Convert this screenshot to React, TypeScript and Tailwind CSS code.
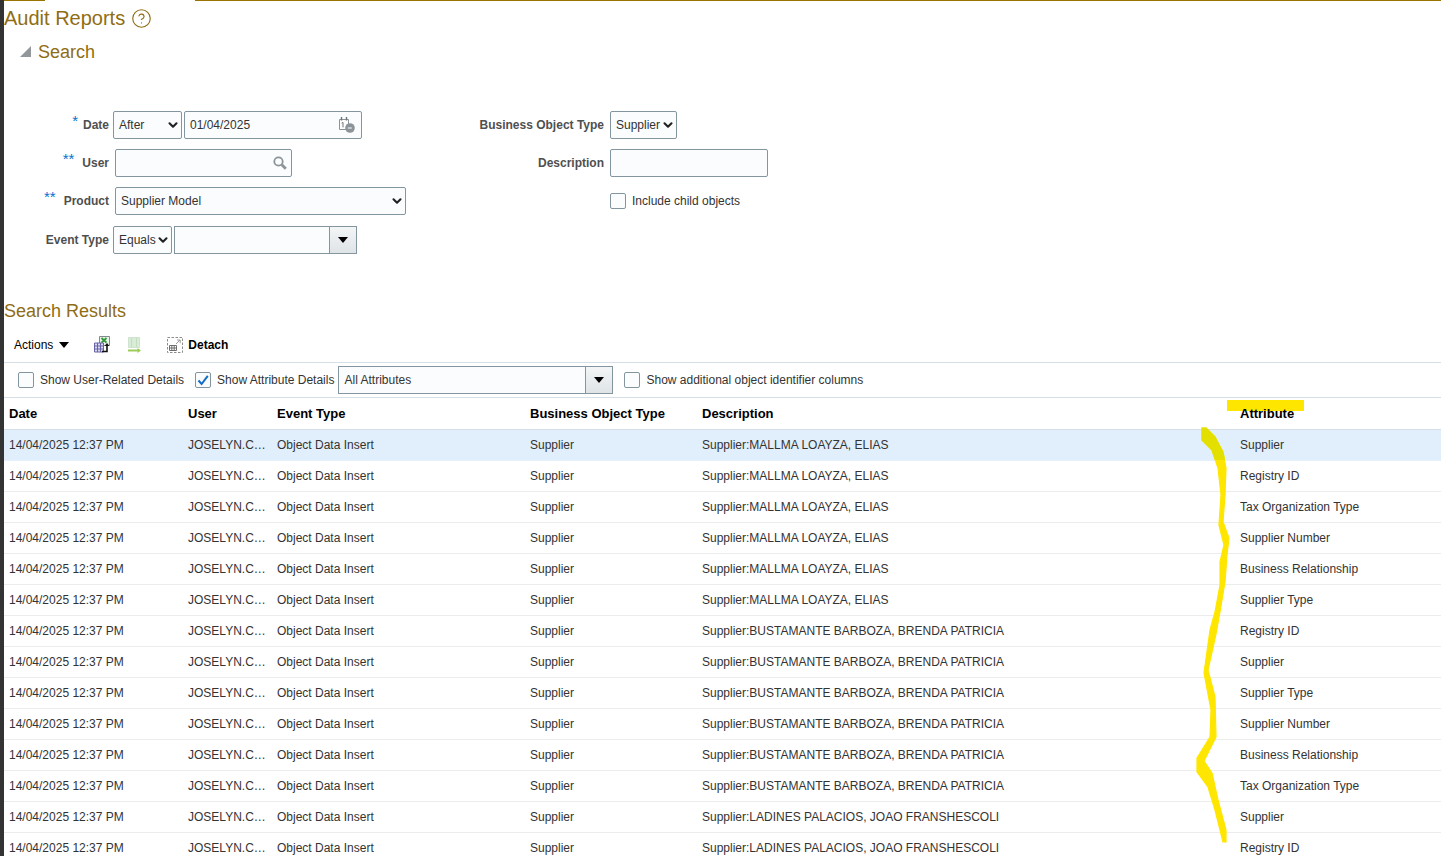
import React from 'react';
import { ChevronDown, CircleHelp } from 'lucide-react';

type Row = { description: string; attribute: string; selected?: boolean };

const MALLMA = 'Supplier:MALLMA LOAYZA, ELIAS';
const BUSTAMANTE = 'Supplier:BUSTAMANTE BARBOZA, BRENDA PATRICIA';
const LADINES = 'Supplier:LADINES PALACIOS, JOAO FRANSHESCOLI';

const rows: Row[] = [
  { description: MALLMA, attribute: 'Supplier', selected: true },
  { description: MALLMA, attribute: 'Registry ID' },
  { description: MALLMA, attribute: 'Tax Organization Type' },
  { description: MALLMA, attribute: 'Supplier Number' },
  { description: MALLMA, attribute: 'Business Relationship' },
  { description: MALLMA, attribute: 'Supplier Type' },
  { description: BUSTAMANTE, attribute: 'Registry ID' },
  { description: BUSTAMANTE, attribute: 'Supplier' },
  { description: BUSTAMANTE, attribute: 'Supplier Type' },
  { description: BUSTAMANTE, attribute: 'Supplier Number' },
  { description: BUSTAMANTE, attribute: 'Business Relationship' },
  { description: BUSTAMANTE, attribute: 'Tax Organization Type' },
  { description: LADINES, attribute: 'Supplier' },
  { description: LADINES, attribute: 'Registry ID' },
];

const GRID = 'grid grid-cols-[179px_89px_253px_172px_538px_206px]';
const FIELD = 'h-7 rounded-[2px] border border-[#83969f] bg-[#fbfcfd] text-xs text-[#333]';

const SelectBox = ({ value, className }: { value: string; className: string }) => (
  <div className={`${FIELD} flex items-center justify-between pl-[5px] pr-[1px] ${className}`}>
    <span>{value}</span>
    <ChevronDown size={14} strokeWidth={3.6} className="text-[#222]" />
  </div>
);

const ComboBox = ({ value, className }: { value?: string; className: string }) => (
  <div className={`${FIELD} flex items-stretch rounded-none ${className}`}>
    <span className="flex flex-1 items-center pl-[5px]">{value}</span>
    <span className="flex w-[27px] items-center justify-center border-l border-[#83969f] bg-gradient-to-b from-[#f3f5f6] to-[#dfe4e7]">
      <span className="h-0 w-0 border-x-[5px] border-t-[6px] border-x-transparent border-t-black" />
    </span>
  </div>
);

const CheckBox = ({ checked }: { checked?: boolean }) => (
  <span className="flex h-4 w-4 shrink-0 items-center justify-center rounded-[2px] border border-[#83969f] bg-[#fbfcfd]">
    {checked && (
      <svg width="12" height="12" viewBox="0 0 12 12">
        <path d="M1.5 6.5 L4.6 10 L10.8 1.8" fill="none" stroke="#0f6fc6" strokeWidth="2" />
      </svg>
    )}
  </span>
);

const Label = ({ text, stars, className = '' }: { text: string; stars?: string; className?: string }) => (
  <div className={`flex shrink-0 justify-end text-xs font-bold text-[#4f4f4f] ${className}`}>
    {stars && <span className="relative -top-[3px] text-[15px] leading-[14px] font-normal text-[#0572ce]">{stars}</span>}
    <span>{text}</span>
  </div>
);

const SearchIcon = () => (
  <svg width="14" height="14" viewBox="0 0 14 14">
    <circle cx="5.5" cy="5.5" r="4.2" fill="none" stroke="#8d9499" strokeWidth="1.8" />
    <path d="M8.8 8.8 L12.8 12.8" stroke="#8d9499" strokeWidth="2.8" />
  </svg>
);

const CalendarIcon = () => (
  <svg width="18" height="18" viewBox="0 0 18 18">
    <path d="M1.5 3.5h9v10h-9z" fill="#fff" stroke="#8d9499" />
    <path d="M3.5 1v3.5M8.5 1v3.5" stroke="#6f767b" strokeWidth="1.4" />
    <path d="M3.6 7.2l1.4-.8v5" fill="none" stroke="#6f767b" />
    <circle cx="12" cy="12" r="4.8" fill="#8d9499" />
    <path d="M9.8 12h4" stroke="#fff" strokeWidth="1" />
  </svg>
);

const ExportIcon = () => (
  <svg width="16" height="17" viewBox="0 0 16 17">
    <path d="M5.5 .5h10v9h-10z" fill="#eef3ea" stroke="#7f8a91" />
    <path d="M7.5 2l5 4.6M12.5 2l-5 4.6" stroke="#2f9a3a" strokeWidth="1.9" />
    <path d="M.5 7h9v9h-9z" fill="#dcd9ef" stroke="#6663a6" />
    <path d="M.5 10h9M.5 13h9M3.5 7v9M6.5 7v9" stroke="#6663a6" />
    <path d="M8 15.5h5v-6" fill="none" stroke="#111" strokeWidth="1.6" />
    <path d="M10.6 10l2.4-3 2.4 3z" fill="#111" />
  </svg>
);

const FreezeIcon = () => (
  <svg width="13" height="16" viewBox="0 0 13 16">
    <path d="M.5.5h11v10H.5z" fill="#d9ecd8" stroke="#d0e3d0" />
    <path d="M3.5 1v9M8.5 1v9" stroke="#c2dfc0" />
    <path d="M0 13.5h10" stroke="#9ccb5b" strokeWidth="2" />
    <path d="M9.5 11l3.5 2.5-3.5 2.5z" fill="#9ccb5b" />
  </svg>
);

const DetachIcon = () => (
  <svg width="16" height="16" viewBox="0 0 16 16">
    <rect x=".5" y=".5" width="15" height="15" fill="none" stroke="#8b8b8b" strokeDasharray="2.5 1.5" />
    <path d="M9 7l4-4M10 3h3.2v3.2" fill="none" stroke="#9a9a9a" />
    <path d="M2.5 8.5h7v5h-7zM2.5 11h7M4.8 8.5v5M7.2 8.5v5" fill="none" stroke="#6e6e6e" />
  </svg>
);

const STROKE_OUTLINE =
  'M1202 428 L1206 428 L1215 437 L1223 452 L1226 468 L1225 495 L1223 522 L1229 538 L1227 555 L1225 582 L1220 612 L1216 634 L1212 652 L1208 670 L1215 697 L1216 737 L1204 761 L1212 773 L1218 800 L1226 830 L1226 842 L1223 842 L1215 810 L1208 787 L1197 772 L1197 758 L1210 737 L1211 710 L1204 673 L1210 630 L1215 612 L1220 585 L1220 562 L1224 545 L1219 525 L1221 495 L1218 468 L1212 450 L1202 440 Z';

// the yellow marker stroke somebody drew over the screenshot
const MarkerStroke = () => (
  <svg className="pointer-events-none absolute left-[1190px] top-[425px]" width="45" height="420" viewBox="1190 425 45 420">
    <defs>
      <clipPath id="selected-row">
        <rect x="1190" y="425" width="45" height="35" />
      </clipPath>
    </defs>
    <path d={STROKE_OUTLINE} fill="#ffe600" stroke="#ffe600" strokeWidth="1.2" strokeLinejoin="round" />
    <path d={STROKE_OUTLINE} fill="#e3e000" stroke="#e3e000" strokeWidth="1.2" strokeLinejoin="round" clipPath="url(#selected-row)" />
  </svg>
);

const App: React.FC = () => {
  return (
    <div className="relative flex h-screen overflow-hidden bg-white font-['Liberation_Sans',Arial,sans-serif] text-[#333]">
      <div className="w-1 shrink-0 bg-[#333]" />
      <div className="min-w-0 flex-1">
        <div className="flex h-px">
          <div className="w-[41px] bg-[#9b7400]" />
          <div className="w-[150px]" />
          <div className="flex-1 bg-[#9b7400]" />
        </div>

        <div className="flex h-[34px] items-center gap-[6px]">
          <h1 className="text-xl leading-none text-[#8f6d14]">Audit Reports</h1>
          <CircleHelp size={21} strokeWidth={1.3} className="text-[#8f6d14]" />
        </div>

        <div className="flex h-[33px] items-center gap-[7px] pl-4">
          <span className="h-0 w-0 border-b-[11px] border-l-[11px] border-l-transparent border-b-[#92979b]" />
          <h2 className="text-lg leading-none text-[#8f6d14]">Search</h2>
        </div>

        <div className="mt-[43px] flex">
          <div className="flex w-[600px] flex-col">
            <div className="flex h-[38px]">
              <Label text="Date" stars="*" className="w-[105px] gap-[5px] pt-[6px]" />
              <SelectBox value="After" className="ml-1 w-[69px]" />
              <div className={`${FIELD} ml-[2px] flex w-[178px] items-center justify-between pl-[5px] pr-[5px]`}>
                <span>01/04/2025</span>
                <CalendarIcon />
              </div>
            </div>
            <div className="flex h-[38px]">
              <Label text="User" stars="**" className="w-[105px] gap-[8px] pt-[6px]" />
              <div className={`${FIELD} ml-[6px] flex w-[177px] items-center justify-end pr-[4px]`}>
                <SearchIcon />
              </div>
            </div>
            <div className="flex h-[39px]">
              <Label text="Product" stars="**" className="w-[105px] gap-[8px] pt-[6px]" />
              <SelectBox value="Supplier Model" className="ml-[6px] w-[291px]" />
            </div>
            <div className="flex h-[38px]">
              <Label text="Event Type" className="w-[105px] pt-[6px]" />
              <SelectBox value="Equals" className="ml-1 w-[59px]" />
              <ComboBox className="ml-[2px] w-[183px]" />
            </div>
          </div>

          <div className="flex flex-col">
            <div className="flex h-[38px]">
              <Label text="Business Object Type" className="w-[600px] -ml-[600px] pt-[6px]" />
              <SelectBox value="Supplier" className="ml-[6px] w-[67px]" />
            </div>
            <div className="flex h-[38px]">
              <Label text="Description" className="w-[600px] -ml-[600px] pt-[6px]" />
              <div className={`${FIELD} ml-[6px] w-[158px]`} />
            </div>
            <div className="ml-[6px] flex h-[28px] items-center gap-[6px] text-xs">
              <CheckBox />
              <span>Include child objects</span>
            </div>
          </div>
        </div>

        <h2 className="mt-[35px] flex h-[24px] items-center text-lg leading-none text-[#8f6d14]">Search Results</h2>

        <div className="mt-[6px] flex h-[33px] items-center pb-[2px] text-xs">
          <span className="ml-[10px] text-black">Actions</span>
          <span className="ml-[6px] h-0 w-0 border-x-[5px] border-t-[6px] border-x-transparent border-t-black" />
          <span className="ml-[25px] flex"><ExportIcon /></span>
          <span className="ml-[18px] flex"><FreezeIcon /></span>
          <span className="ml-[26px] flex"><DetachIcon /></span>
          <span className="ml-[5px] font-bold text-black">Detach</span>
        </div>

        <div className="flex h-[36px] items-center border-y border-[#d6dfe6] text-xs">
          <span className="ml-[14px]"><CheckBox /></span>
          <span className="ml-[6px]">Show User-Related Details</span>
          <span className="ml-[11px]"><CheckBox checked /></span>
          <span className="ml-[6px]">Show Attribute Details</span>
          <ComboBox value="All Attributes" className="ml-[4px] w-[275px]" />
          <span className="ml-[11px]"><CheckBox /></span>
          <span className="ml-[6px]">Show additional object identifier columns</span>
        </div>

        <div className={`${GRID} h-[32px] items-center border-b border-[#d6dfe6] text-[13px] font-bold text-black`}>
          <span className="pl-[5px]">Date</span>
          <span className="pl-[5px]">User</span>
          <span className="pl-[5px]">Event Type</span>
          <span className="pl-[5px]">Business Object Type</span>
          <span className="pl-[5px]">Description</span>
          <span className="relative pl-[5px]">
            <span className="absolute left-[-8px] top-[-4px] h-[11px] w-[77px] bg-[#ffe600]" />
            <span className="relative">Attribute</span>
          </span>
        </div>

        {rows.map((row, i) => (
          <div
            key={i}
            className={`${GRID} h-[31px] items-center border-b text-xs ${row.selected ? 'border-[#e4f0fb] bg-[#e1effc]' : 'border-[#ececec]'}`}
          >
            <span className="pl-[5px]">14/04/2025 12:37 PM</span>
            <span className="pl-[5px]">JOSELYN.C…</span>
            <span className="pl-[5px]">Object Data Insert</span>
            <span className="pl-[5px]">Supplier</span>
            <span className="pl-[5px]">{row.description}</span>
            <span className="pl-[5px]">{row.attribute}</span>
          </div>
        ))}
      </div>
      <MarkerStroke />
    </div>
  );
};

export default App;
